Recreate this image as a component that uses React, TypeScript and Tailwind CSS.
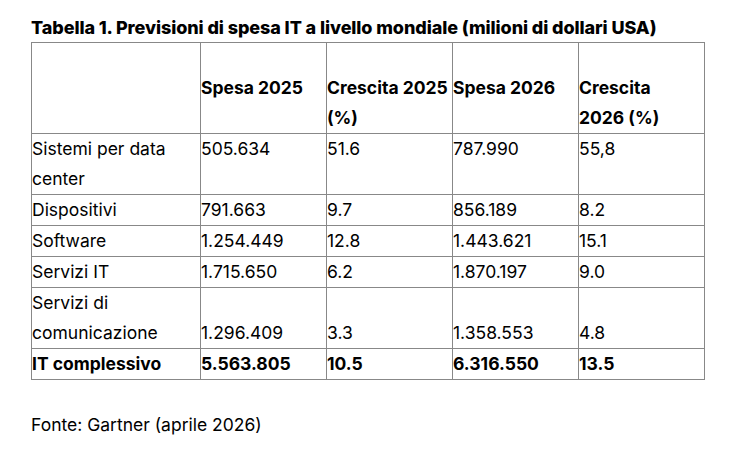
const rows = [
  { label: ['Sistemi per data', 'center'], s25: '505.634', c25: '51.6', s26: '787.990', c26: '55,8', bottom: false },
  { label: ['Dispositivi'], s25: '791.663', c25: '9.7', s26: '856.189', c26: '8.2' },
  { label: ['Software'], s25: '1.254.449', c25: '12.8', s26: '1.443.621', c26: '15.1' },
  { label: ['Servizi IT'], s25: '1.715.650', c25: '6.2', s26: '1.870.197', c26: '9.0' },
  { label: ['Servizi di', 'comunicazione'], s25: '1.296.409', c25: '3.3', s26: '1.358.553', c26: '4.8', bottom: true },
];

const cell = 'border border-[#888888] p-0 text-left';

export default function App() {
  return (
    <div className="min-h-[450px] bg-white pl-[31px] pt-[16px] text-black font-['Inter',sans-serif]">
      <h1 className="mb-[2px] text-[18px] font-extrabold leading-[24px] tracking-[-0.005em]">
        Tabella 1. Previsioni di spesa IT a livello mondiale (milioni di dollari USA)
      </h1>

      <table className="w-[673px] table-fixed border-collapse text-[17.5px] leading-[30px]">
        <colgroup>
          <col className="w-[169px]" />
          <col className="w-[126px]" />
          <col className="w-[126px]" />
          <col className="w-[126px]" />
          <col className="w-[126px]" />
        </colgroup>
        <thead>
          <tr className="h-[91px] align-top font-bold">
            <th className={cell}></th>
            <th className={`${cell} pt-[30px]`}>Spesa 2025</th>
            <th className={`${cell} pt-[30px] whitespace-nowrap`}>Crescita 2025<br />(%)</th>
            <th className={`${cell} pt-[30px]`}>Spesa 2026</th>
            <th className={`${cell} pt-[30px]`}>Crescita<br />2026 (%)</th>
          </tr>
        </thead>
        <tbody>
          {rows.map((r) => (
            <tr key={r.s25} className={r.bottom ? 'align-bottom' : 'align-top'}>
              <td className={cell}>
                {r.label.map((l, i) => (
                  <div key={i}>{l}</div>
                ))}
              </td>
              <td className={cell}>{r.s25}</td>
              <td className={cell}>{r.c25}</td>
              <td className={cell}>{r.s26}</td>
              <td className={cell}>{r.c26}</td>
            </tr>
          ))}
          <tr className="align-top font-bold">
            <td className={cell}>IT complessivo</td>
            <td className={cell}>5.563.805</td>
            <td className={cell}>10.5</td>
            <td className={cell}>6.316.550</td>
            <td className={cell}>13.5</td>
          </tr>
        </tbody>
      </table>

      <p className="mt-[30px] text-[17.5px] leading-[30px]">Fonte: Gartner (aprile 2026)</p>
    </div>
  );
}
